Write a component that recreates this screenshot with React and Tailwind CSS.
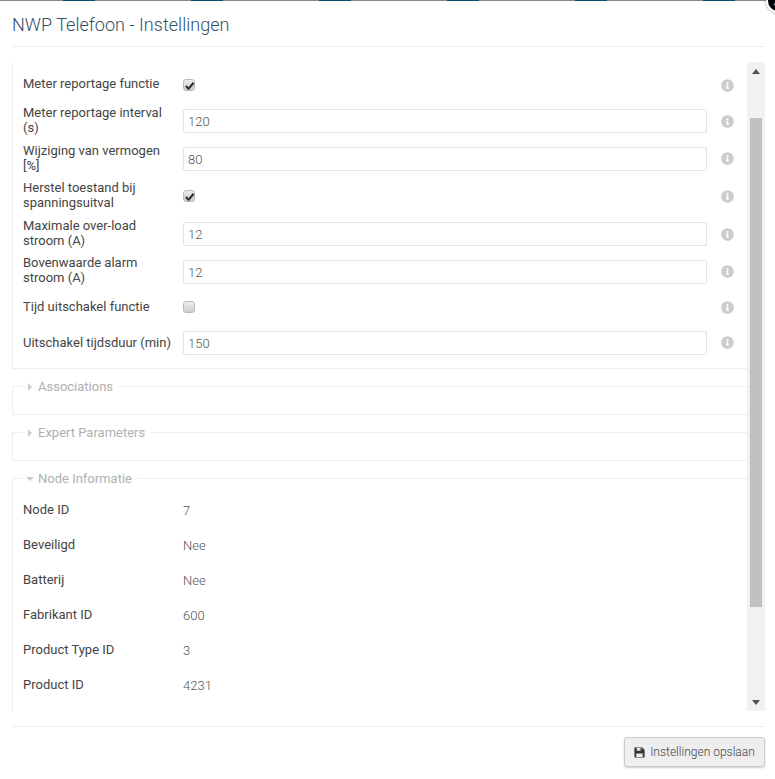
import React from 'react';
import { FaInfoCircle } from 'react-icons/fa';

const segments = [63, 191, 319, 447, 575, 703];

function Checkbox({ checked }) {
  return (
    <span className="flex h-3 w-3 items-center justify-center rounded-[3px] border border-[#bbb] bg-gradient-to-b from-[#eee] to-[#ccc]">
      {checked && (
        <svg viewBox="0 0 12 12" className="h-[11px] w-[11px] shrink-0">
          <path d="M2 6.5 L5 9.5 L10.5 3" fill="none" stroke="#333" strokeWidth="2.4" />
        </svg>
      )}
    </span>
  );
}

function Row({ label, value, check, checked, height, labelPad = 'pb-[3px]', iconPad = '' }) {
  return (
    <div className={`flex items-center ${height}`}>
      <div className={`mr-[10px] w-[150px] shrink-0 leading-[15px] text-[#444] ${labelPad}`}>{label}</div>
      <div className="flex w-[524px] shrink-0 items-center">
        {check ? (
          <Checkbox checked={checked} />
        ) : (
          <input
            readOnly
            value={value}
            className="h-6 w-full rounded-[2px] border border-[#e3e3e3] bg-white px-[4px] text-[13px] font-light text-[#555] outline-none"
          />
        )}
      </div>
      <FaInfoCircle className={`ml-[14px] h-[13px] w-[13px] text-[#ccc] ${iconPad}`} />
    </div>
  );
}

function Legend({ open, children }) {
  return (
    <legend className="ml-[10px] flex items-center gap-1 pl-[3px] pr-[6px] leading-[15px] text-[#b0b0b0]">
      <svg viewBox="0 0 8 8" className="h-2 w-2">
        {open ? <path d="M0 2 H8 L4 6 Z" fill="#ccc" /> : <path d="M2 0 L6 4 L2 8 Z" fill="#ccc" />}
      </svg>
      {children}
    </legend>
  );
}

function Info({ label, value }) {
  return (
    <div className="flex h-[35px] items-center">
      <div className="w-[160px] shrink-0 text-[#444]">{label}</div>
      <div className="mt-[2px] font-light text-[#555]">{value}</div>
    </div>
  );
}

export default function App() {
  return (
    <div className="relative h-[779px] w-[775px] overflow-hidden bg-white font-['Roboto',sans-serif] text-[13px]">
      <div className="flex h-px bg-[#888]">
        {segments.map((x, i) => (
          <div key={x} className={`h-px w-8 bg-[#0b4a6e] ${i === 0 ? 'ml-[63px]' : 'ml-[96px]'}`} />
        ))}
      </div>

      {/* close button, hangs off the corner of the modal */}
      <div className="absolute -right-[15px] -top-[11px] flex h-6 w-6 items-center justify-center rounded-full border-2 border-white bg-black shadow-[0_0_3px_rgba(0,0,0,0.4)]">
        <svg viewBox="0 0 10 10" className="h-[10px] w-[10px]">
          <path d="M1 1 L9 9 M9 1 L1 9" stroke="#7fb2d6" strokeWidth="1.6" />
        </svg>
      </div>

      <div className="mx-3 w-[753px]">
        <div className="h-[46px] border-b border-[#eee] pt-[11px] text-[18px] font-light leading-[25px] tracking-[0.03px] text-[#2f5166]">
          NWP Telefoon - Instellingen
        </div>

        <div className="mt-[15px] flex h-[649px] overflow-hidden">
          <div className="w-[735px] shrink-0">
            <fieldset className="flex w-[736px] flex-col border border-t-0 border-[#eee] pl-[10px] pt-[10px] pb-[13px]">
              <Row label="Meter reportage functie" check checked height="h-[26px]" />
              <div className="h-2" />
              <Row label="Meter reportage interval (s)" value="120" height="h-[30px]" />
              <div className="h-2" />
              <Row label="Wijziging van vermogen [%]" value="80" height="h-[30px]" iconPad="mb-[2px]" />
              <div className="h-[7px]" />
              <Row label="Herstel toestand bij spanningsuitval" check checked height="h-[30px]" />
              <div className="h-2" />
              <Row label="Maximale over-load stroom (A)" value="12" height="h-[30px]" />
              <div className="h-2" />
              <Row label="Bovenwaarde alarm stroom (A)" value="12" height="h-[30px]" labelPad="pb-[5px]" iconPad="mb-[2px]" />
              <div className="h-2" />
              <Row label="Tijd uitschakel functie" check height="h-[24px]" labelPad="pb-px" />
              <div className="h-3" />
              <Row label="Uitschakel tijdsduur (min)" value="150" height="h-[24px]" labelPad="pb-px" iconPad="mb-[2px]" />
            </fieldset>

            <fieldset className="mt-[10px] w-[736px] border border-[#eee] pb-5">
              <Legend>Associations</Legend>
            </fieldset>
            <fieldset className="mt-[10px] w-[736px] border border-[#eee] pb-5">
              <Legend>Expert Parameters</Legend>
            </fieldset>
            <fieldset className="mt-[10px] w-[736px] border border-b-0 border-[#eee]">
              <Legend open>Node Informatie</Legend>
              <div className="pl-[10px] pt-[6px] pb-5">
                <Info label="Node ID" value="7" />
                <Info label="Beveiligd" value="Nee" />
                <Info label="Batterij" value="Nee" />
                <Info label="Fabrikant ID" value="600" />
                <Info label="Product Type ID" value="3" />
                <Info label="Product ID" value="4231" />
              </div>
            </fieldset>
          </div>

          <div className="flex w-[18px] shrink-0 flex-col items-center bg-[#f1f1f1] px-[3px]">
            <svg viewBox="0 0 8 5" className="mt-[7px] h-[5px] w-2 shrink-0">
              <path d="M0 5 L4 0 L8 5 Z" fill="#505050" />
            </svg>
            <div className="mt-[44px] h-[489px] w-full shrink-0 bg-[#c1c1c1]" />
            <svg viewBox="0 0 8 5" className="mt-[93px] h-[5px] w-2 shrink-0">
              <path d="M0 0 L8 0 L4 5 Z" fill="#505050" />
            </svg>
          </div>
        </div>

        <div className="mt-[15px] flex justify-end border-t border-[#eee] pt-[10px]">
          <button className="flex h-[30px] w-[141px] items-center justify-center gap-[5px] rounded-[3px] border border-[#ccc] bg-[#eee] text-[12px] font-light text-[#444] shadow-[0_1px_2px_rgba(0,0,0,0.2)]">
            {/* floppy disk */}
            <svg viewBox="0 0 12 12" className="h-[11px] w-[11px] shrink-0">
              <path d="M0.5 0.5 H9 L11.5 3 V11.5 H0.5 Z" fill="#333" />
              <path d="M3 1.2 H8 V4.2 H3 Z M2.5 7 H9.5 V11 H2.5 Z" fill="#eee" />
              <path d="M6.4 1.6 H7.4 V3.8 H6.4 Z" fill="#333" />
            </svg>
            Instellingen opslaan
          </button>
        </div>
      </div>
    </div>
  );
}
